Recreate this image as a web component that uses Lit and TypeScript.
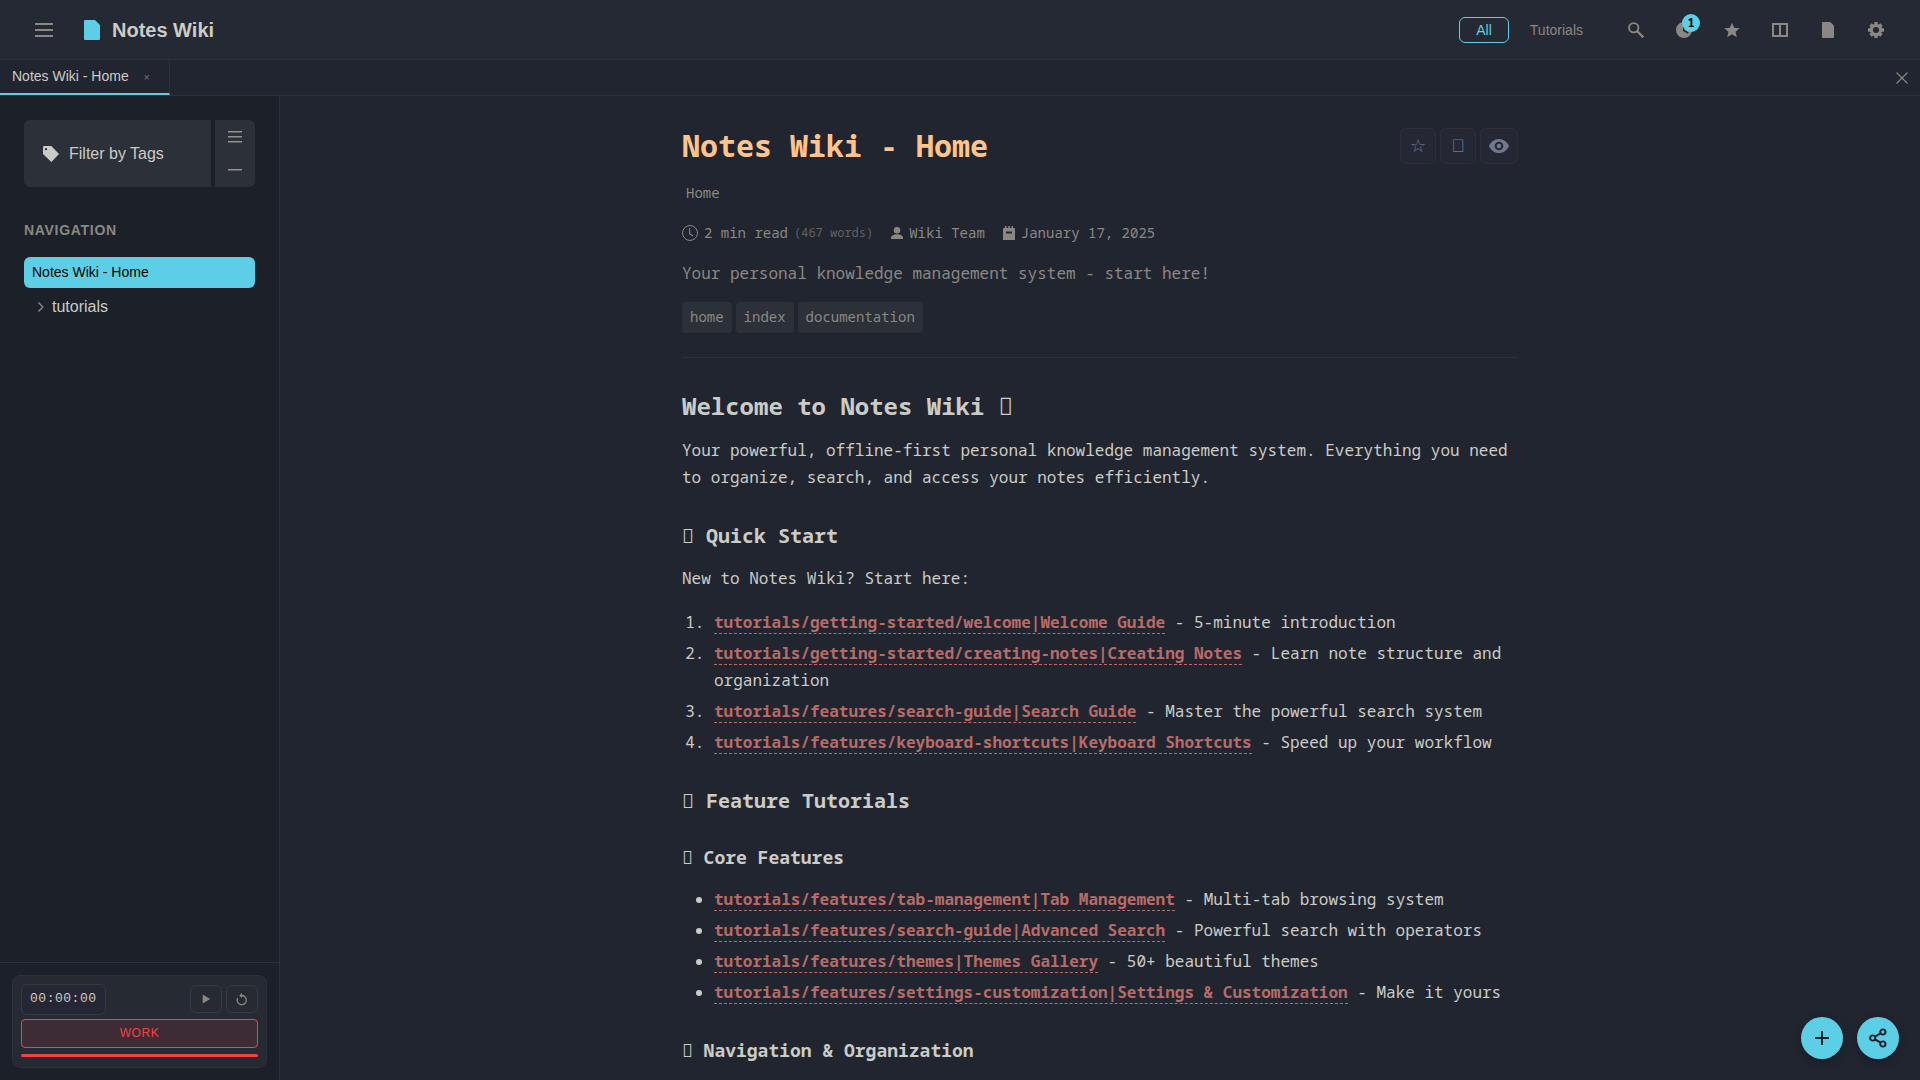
import { LitElement, html, css, svg, nothing } from "lit";
import { customElement } from "lit/decorators.js";

type Entry = { path: string; text: string };

const quickStart: Entry[] = [
  { path: "tutorials/getting-started/welcome|Welcome Guide", text: "5-minute introduction" },
  { path: "tutorials/getting-started/creating-notes|Creating Notes", text: "Learn note structure and organization" },
  { path: "tutorials/features/search-guide|Search Guide", text: "Master the powerful search system" },
  { path: "tutorials/features/keyboard-shortcuts|Keyboard Shortcuts", text: "Speed up your workflow" },
];

const coreFeatures: Entry[] = [
  { path: "tutorials/features/tab-management|Tab Management", text: "Multi-tab browsing system" },
  { path: "tutorials/features/search-guide|Advanced Search", text: "Powerful search with operators" },
  { path: "tutorials/features/themes|Themes Gallery", text: "50+ beautiful themes" },
  { path: "tutorials/features/settings-customization|Settings & Customization", text: "Make it yours" },
];

// Placeholder symbol shown in headings and on the copy button.
const glyph = "\u{10FF00}";

const shapes = {
  logo: svg`<path d="M5 2H15L20 7V21a1 1 0 0 1-1 1H5a1 1 0 0 1-1-1V3a1 1 0 0 1 1-1Z"/>`,
  search: svg`<g fill="none" stroke="currentColor"><circle cx="8.600" cy="8.600" r="7" stroke-width="2.800"/><path d="M13.600 13.600L23 23" stroke-width="3.400"/></g>`,
  recent: svg`<path fill-rule="evenodd" d="M12 0a12 12 0 1 0 0 24 12 12 0 0 0 0-24ZM10.500 5.500h2.500v6.500l6 3.500-1.400 2L10.500 13.500Z"/>`,
  star: svg`<path d="M12 1l3.300 7.600 8.200.7-6.200 5.400 1.900 8.100L12 18.500l-7.200 4.300 1.900-8.100L.5 9.300l8.200-.7L12 1Z"/>`,
  split: svg`<path fill-rule="evenodd" d="M0 1.500h24v21H0v-21ZM3 4.500v15h7.500v-15H3ZM13.500 4.500v15H21v-15h-7.500Z"/>`,
  file: svg`<path d="M4.500 0H15.500L21 5.500V22.500a1.500 1.500 0 0 1-1.500 1.500h-15A1.500 1.500 0 0 1 3 22.500v-21A1.500 1.500 0 0 1 4.500 0Z"/>`,
  gear: svg`<g fill="none" stroke="currentColor"><circle cx="12" cy="12" r="7" stroke-width="4.800"/><path stroke-width="5" d="M12 0v4M12 20v4M0 12h4M20 12h4M3.800 3.800l2.600 2.600M17.600 17.600l2.600 2.600M20.200 3.800l-2.600 2.600M6.400 17.600l-2.600 2.600"/></g>`,
  close: svg`<path d="M1 1L23 23M23 1L1 23" fill="none" stroke="currentColor" stroke-width="2.200"/>`,
  tag: svg`<path fill-rule="evenodd" d="M2 0H12.500L24 12 12.500 24 0 12V2a2 2 0 0 1 2-2ZM4.500 3A1.700 1.700 0 1 0 4.500 6.400 1.700 1.700 0 0 0 4.500 3Z"/>`,
  chevron: svg`<path d="M6 1l10.500 11L6 23" fill="none" stroke="currentColor" stroke-width="3.200"/>`,
  play: svg`<path d="M4 1L22 12 4 23Z"/>`,
  reset: svg`<path d="M3.200 10A9.200 9.200 0 1 0 12 5H9" fill="none" stroke="currentColor" stroke-width="2.600"/><path d="M12 0v10L6.500 5Z"/>`,
  eye: svg`<path fill-rule="evenodd" d="M12 3.500C6.500 3.500 2 7 0 12c2 5 6.500 8.500 12 8.500S22 17 24 12c-2-5-6.500-8.500-12-8.500Zm0 3.300a5.200 5.200 0 1 0 0 10.400 5.200 5.200 0 0 0 0-10.400Zm0 2.400a2.800 2.800 0 1 1 0 5.600 2.800 2.800 0 0 1 0-5.600Z"/>`,
  clock: svg`<circle cx="12" cy="12" r="11.200" fill="none" stroke="currentColor" stroke-width="1.500"/><path d="M11.500 5v8l5 3.500" fill="none" stroke="currentColor" stroke-width="1.700"/>`,
  user: svg`<circle cx="12" cy="6.500" r="6.500"/><path d="M0 24v-2.500C0 17 6 14.500 12 14.500S24 17 24 21.500V24Z"/>`,
  calendar: svg`<path fill-rule="evenodd" d="M2 4h2V0h3v4H10.500V0h3v4H17V0h3v4H22q2 0 2 2V28H0V6q0-2 2-2ZM6 11v4h12v-4Z"/>`,
  plus: svg`<path d="M12 0v24M0 12h24" fill="none" stroke="currentColor" stroke-width="3.400"/>`,
  share: svg`<g fill="none" stroke="currentColor" stroke-width="2.600"><circle cx="5" cy="12" r="3.500"/><circle cx="18.500" cy="4" r="3.500"/><circle cx="18.500" cy="20" r="3.500"/><path d="M8 10.200L15.500 5.800M8 13.800L15.500 18.200"/></g>`,
};

const icon = (name: keyof typeof shapes, size: string, box = "0 0 24 24") =>
  html`<svg class="icon ${size}" viewBox=${box} fill="currentColor" aria-hidden="true">${shapes[name]}</svg>`;

@customElement("app-root")
export class AppRoot extends LitElement {
  static styles = css`
    :host {
      display: flex;
      flex-direction: column;
      height: 100vh;
      overflow: hidden;
      background: #212530;
      color: #cbccc6;
      font: 16px/27px "Liberation Sans", Arial, sans-serif;
    }
    * { box-sizing: border-box; }
    button {
      font: inherit;
      color: inherit;
      background: none;
      border: 0;
      margin: 0;
      padding: 0;
      display: flex;
      align-items: center;
      justify-content: center;
      cursor: pointer;
    }
    a { color: inherit; text-decoration: none; }
    .icon { display: block; flex: none; overflow: visible; }
    .s24 { width: 24px; height: 24px; }
    .s18 { width: 18px; height: 18px; }
    .s20 { width: 20px; height: 20px; }
    .s16 { width: 16px; height: 16px; }
    .s14 { width: 14px; height: 14px; }
    .s12 { width: 12px; height: 12px; }
    .s10 { width: 10px; height: 10px; }
    .cal { width: 12px; height: 14px; }

    .topbar {
      display: flex;
      align-items: center;
      justify-content: space-between;
      height: 60px;
      flex: none;
      padding: 0 24px;
      background: #252934;
      border-bottom: 1px solid #2d303b;
    }
    .group { display: flex; align-items: center; }
    .brand { display: flex; align-items: center; gap: 8px; margin-left: 16px; font-size: 20px; line-height: 28px; font-weight: 700; }
    .brand .icon { color: #5ccfe6; }
    .tool { width: 40px; height: 40px; color: #8a8880; position: relative; }
    .bars { display: grid; gap: 4px; }
    .bars i { display: block; width: 18px; height: 2px; background: currentColor; }
    .contexts { display: flex; gap: 4px; margin-right: 16px; }
    .context {
      font-size: 14px;
      line-height: 24px;
      padding: 0 16px;
      border: 1px solid transparent;
      border-radius: 6px;
      color: #8a8880;
    }
    .context.on { color: #5ccfe6; border-color: #5ccfe6; }
    .tools { display: flex; gap: 8px; }
    .badge {
      position: absolute;
      top: 4px;
      right: 4px;
      width: 18px;
      height: 18px;
      border-radius: 9px;
      background: #5ccfe6;
      color: #000;
      font: 700 12px/18px "Noto Sans Mono", monospace;
      text-align: center;
    }

    .tabs {
      display: flex;
      justify-content: space-between;
      height: 36px;
      flex: none;
      border-bottom: 1px solid #2d303b;
    }
    .tab {
      display: flex;
      align-items: center;
      gap: 8px;
      padding: 0 12px;
      font-size: 14px;
      line-height: 23px;
      border-right: 1px solid #2d303b;
      border-bottom: 2px solid #5ccfe6;
    }
    .tab-close { width: 20px; height: 20px; padding-top: 1px; font-size: 10px; color: #707a8c; }
    .close-all { width: 36px; color: #8a8880; }

    .body { display: flex; flex: 1; min-height: 0; }
    .side {
      width: 280px;
      flex: none;
      display: flex;
      flex-direction: column;
      justify-content: space-between;
      background: #1c2029;
      border-right: 1px solid #2d303b;
    }
    .side-top { padding: 24px; }
    .filter { display: flex; gap: 4px; height: 67px; margin-bottom: 32px; }
    .filter-main {
      flex: 1;
      justify-content: flex-start;
      gap: 10px;
      padding: 0 19px;
      background: #2c3039;
      border-radius: 6px 0 0 6px;
    }
    .filter-modes {
      width: 40px;
      display: flex;
      flex-direction: column;
      background: #2c3039;
      border-radius: 0 6px 6px 0;
    }
    .mode { flex: 1; width: 100%; color: #8a8880; }
    .thin { display: grid; gap: 3px; }
    .thin i { display: block; width: 14px; height: 2px; background: linear-gradient(#95938b 50%, #5f5f5e 50%); }
    .caption {
      margin: 0 0 15px;
      font-size: 14px;
      line-height: 23px;
      letter-spacing: 0.05em;
      color: #8a8880;
    }
    .nav-link {
      display: block;
      padding: 4px 8px;
      font-size: 14px;
      line-height: 23px;
      border-radius: 6px;
      color: #000;
      background: #5ccfe6;
    }
    .folder { display: flex; align-items: center; gap: 6px; padding: 5px 12px; }
    .folder .icon { color: #8a8880; }

    .dock { padding: 12px; border-top: 1px solid #2d303b; }
    .timer {
      display: grid;
      gap: 4px;
      padding: 8px;
      border: 1px solid #2d303b;
      border-radius: 8px;
      background: #262a32;
    }
    .clock-row { display: flex; align-items: center; gap: 4px; }
    .time {
      margin-right: auto;
      padding: 2px 8px 4px;
      font: 13px/23px "Liberation Mono", monospace;
      letter-spacing: 0.04em;
      border: 1px solid #363944;
      border-radius: 6px;
      background: #252834;
    }
    .mini {
      width: 32px;
      height: 28px;
      margin-bottom: 1px;
      border: 1px solid #363944;
      border-radius: 6px;
      color: #8a8880;
    }
    .phase {
      height: 29px;
      padding-bottom: 1px;
      font-size: 12px;
      line-height: 20px;
      letter-spacing: 0.05em;
      color: #f04343;
      border: 1px solid #f04343;
      border-radius: 4px;
      background: #3d2c35;
    }
    .progress { height: 3px; margin: 2px 0; border-radius: 2px; background: #f04343; }

    .main { flex: 1; min-width: 0; overflow: hidden; }
    .note {
      max-width: 900px;
      margin: 0 auto;
      padding: 32px;
      font-family: "Noto Sans Mono", "Fira Code", monospace;
    }
    .title-row { display: flex; justify-content: space-between; align-items: center; margin-bottom: 16px; }
    h1 { margin: 0; font-size: 30px; line-height: 36px; color: #ffc48c; }
    h2 { margin: 32px 0 15px; font-size: 24px; line-height: 32px; }
    h3 { margin: 31px 0 16px; font-size: 20px; line-height: 27px; }
    h4 { margin: 31px 0 16px; font-size: 18px; line-height: 24px; }
    p { margin: 15px 0; }
    .actions { display: flex; gap: 4px; }
    .action {
      width: 36px;
      height: 36px;
      border: 1px solid #2d303b;
      border-radius: 6px;
      background: #252834;
      color: #707a8c;
      font: 18px/20px "Liberation Sans", sans-serif;
    }
    .action.wide { width: 38px; }
    .crumbs { padding: 0 4px; font-size: 14px; line-height: 26px; color: #8a8880; }
    .meta {
      display: flex;
      gap: 18px;
      margin: 15px 0;
      font-size: 14px;
      line-height: 24px;
      color: #8a8880;
    }
    .meta-item { display: flex; align-items: center; gap: 6px; }
    .words { font-size: 12px; opacity: 0.6; }
    .summary { color: #8a8880; }
    .tags { display: flex; gap: 4px; padding-bottom: 24px; border-bottom: 1px solid #2d303b; font-size: 14px; }
    .tag { padding: 3px 8px 5px; line-height: 23px; color: #8a8880; background: #2c3039; border-radius: 4px; }
    ol, ul { padding-left: 32px; }
    ol { margin: 17px 0 16px; }
    ul { margin: 17px 0 32px; }
    li { margin-bottom: 4px; }
    li:last-child { margin-bottom: 0; }
    .ref { font-weight: 700; color: #b86b66; border-bottom: 1px dashed #b86b66; }

    .fabs { position: fixed; right: 21px; bottom: 21px; display: flex; gap: 14px; }
    .fab {
      width: 42px;
      height: 42px;
      border-radius: 50%;
      background: #5ccfe6;
      color: #1c1f29;
      box-shadow: 0 3px 10px rgba(0, 0, 0, 0.25);
    }
  `;

  private entries(items: Entry[]) {
    return items.map((e) => html`<li><a class="ref" href="#">${e.path}</a> - ${e.text}</li>`);
  }

  private tool(name: keyof typeof shapes, label: string, badge?: string) {
    return html`<button class="tool" aria-label=${label}>
      ${icon(name, "s16")}${badge ? html`<span class="badge">${badge}</span>` : nothing}
    </button>`;
  }

  render() {
    return html`
      <header class="topbar">
        <div class="group">
          <button class="tool" aria-label="Toggle sidebar"><span class="bars"><i></i><i></i><i></i></span></button>
          <a class="brand" href="#">${icon("logo", "s24")}Notes Wiki</a>
        </div>
        <div class="group">
          <div class="contexts">
            <button class="context on">All</button>
            <button class="context">Tutorials</button>
          </div>
          <div class="tools">
            ${this.tool("search", "Search")} ${this.tool("recent", "Recent notes", "1")}
            ${this.tool("star", "Favorites")} ${this.tool("split", "Split view")}
            ${this.tool("file", "Notes")} ${this.tool("gear", "Settings")}
          </div>
        </div>
      </header>

      <div class="tabs">
        <div class="tab">
          <span>Notes Wiki - Home</span>
          <button class="tab-close" aria-label="Close tab">×</button>
        </div>
        <button class="close-all" aria-label="Close all tabs">${icon("close", "s12")}</button>
      </div>

      <div class="body">
        <aside class="side">
          <div class="side-top">
            <div class="filter">
              <button class="filter-main">${icon("tag", "s16")}Filter by Tags</button>
              <div class="filter-modes">
                <button class="mode" aria-label="List tags"><span class="thin"><i></i><i></i><i></i></span></button>
                <button class="mode" aria-label="Collapse tags"><span class="thin"><i></i></span></button>
              </div>
            </div>
            <h2 class="caption">NAVIGATION</h2>
            <nav>
              <a class="nav-link" href="#">Notes Wiki - Home</a>
              <a class="folder" href="#">${icon("chevron", "s10")}tutorials</a>
            </nav>
          </div>
          <div class="dock">
            <div class="timer">
              <div class="clock-row">
                <span class="time">00:00:00</span>
                <button class="mini" aria-label="Start">${icon("play", "s10")}</button>
                <button class="mini" aria-label="Reset">${icon("reset", "s12")}</button>
              </div>
              <button class="phase">WORK</button>
              <div class="progress"></div>
            </div>
          </div>
        </aside>

        <main class="main">
          <article class="note">
            <div class="title-row">
              <h1>Notes Wiki - Home</h1>
              <div class="actions">
                <button class="action" aria-label="Favorite">☆</button>
                <button class="action" aria-label="Copy">${glyph}</button>
                <button class="action wide" aria-label="Preview">${icon("eye", "s20")}</button>
              </div>
            </div>
            <nav class="crumbs"><a href="#">Home</a></nav>
            <div class="meta">
              <span class="meta-item">${icon("clock", "s16")}2 min read <span class="words">(467 words)</span></span>
              <span class="meta-item">${icon("user", "s12")}Wiki Team</span>
              <span class="meta-item">${icon("calendar", "cal", "0 0 24 28")}January 17, 2025</span>
            </div>
            <p class="summary">Your personal knowledge management system - start here!</p>
            <div class="tags">
              <a class="tag" href="#">home</a><a class="tag" href="#">index</a><a class="tag" href="#">documentation</a>
            </div>

            <h2>Welcome to Notes Wiki ${glyph}</h2>
            <p>
              Your powerful, offline-first personal knowledge management system. Everything you need to organize,
              search, and access your notes efficiently.
            </p>
            <h3>${glyph} Quick Start</h3>
            <p>New to Notes Wiki? Start here:</p>
            <ol>${this.entries(quickStart)}</ol>
            <h3>${glyph} Feature Tutorials</h3>
            <h4>${glyph} Core Features</h4>
            <ul>${this.entries(coreFeatures)}</ul>
            <h4>${glyph} Navigation &amp; Organization</h4>
          </article>
        </main>
      </div>

      <div class="fabs">
        <button class="fab" aria-label="New note">${icon("plus", "s14")}</button>
        <button class="fab" aria-label="Share">${icon("share", "s18")}</button>
      </div>
    `;
  }
}
